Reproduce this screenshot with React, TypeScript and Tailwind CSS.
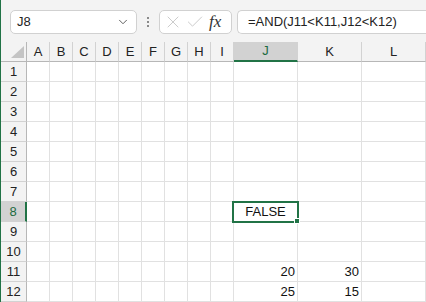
import { Check, ChevronDown, X } from "lucide-react";

const cols = ["A", "B", "C", "D", "E", "F", "G", "H", "I", "J", "K", "L"];
const widths: Record<string, string> = { J: "w-[64px]", K: "w-[64px]", L: "w-[64px]" };
const values: Record<string, string> = { J11: "20", K11: "30", J12: "25", K12: "15" };

function Toolbar() {
  return (
    <div className="flex h-[42px] items-start pt-[10px] pl-[9px]">
      <div className="flex h-[24px] w-[127px] items-center justify-between rounded-[5px] border border-[#d1d1d1] bg-white pl-[6px] pr-[6px] text-[13px] text-[#222]">
        <span>J8</span>
        <ChevronDown size={14} strokeWidth={1.6} className="text-[#555]" />
      </div>
      <div className="flex h-[24px] w-[22px] flex-col items-center justify-center gap-[2px]">
        <span className="h-[2px] w-[2px] bg-[#8a8a8a]" />
        <span className="h-[2px] w-[2px] bg-[#8a8a8a]" />
        <span className="h-[2px] w-[2px] bg-[#8a8a8a]" />
      </div>
      <div className="flex h-[24px] w-[73px] items-center rounded-[5px] border border-[#d1d1d1] bg-white pl-[3px]">
        <X size={20} strokeWidth={1} className="text-[#c2c2c2]" />
        <Check size={20} strokeWidth={1} className="ml-[2px] text-[#c2c2c2]" />
        <span className="ml-[4px] font-['Liberation_Serif',serif] text-[17px] italic text-[#333]">fx</span>
      </div>
      <div className="ml-[5px] flex h-[24px] flex-1 items-center rounded-l-[5px] border border-r-0 border-[#d1d1d1] bg-white pl-[10px] text-[13px] text-[#222]">
        =AND(J11&lt;K11,J12&lt;K12)
      </div>
    </div>
  );
}

function HeaderRow() {
  return (
    <div className="flex h-[20px]">
      <div className="flex h-[20px] w-[26px] shrink-0 items-end justify-end border-r border-b border-[#b7b7b7] pr-[2px] pb-[3px]">
        <svg width="13" height="12" viewBox="0 0 13 12">
          <polygon points="13,0 13,12 0,12" fill="#c4c4c4" />
        </svg>
      </div>
      {cols.map((c) => (
        <div
          key={c}
          className={`flex h-[20px] shrink-0 items-center justify-center border-r border-[#d2d2d2] ${widths[c] ?? "w-[23px]"} ${
            c === "J" ? "border-b-2 border-b-[#217346] bg-[#d2d2d2] text-[#1d6b40]" : "border-b border-b-[#b7b7b7] text-[#222]"
          }`}
        >
          {c}
        </div>
      ))}
    </div>
  );
}

function Row({ n }: { n: number }) {
  const selected = n === 8;
  return (
    <div className="flex h-[20px]">
      <div
        className={`flex h-[20px] w-[26px] shrink-0 items-center justify-center border-b border-b-[#d2d2d2] ${
          selected ? "border-r-2 border-r-[#217346] bg-[#d2d2d2] text-[#1d6b40]" : "border-r border-r-[#b7b7b7] bg-[#f3f3f3] text-[#222]"
        }`}
      >
        {n}
      </div>
      {cols.map((c) => (
        <div
          key={c}
          className={`relative flex h-[20px] shrink-0 items-center justify-end border-r border-b border-[#e1e1e1] bg-white pr-[2px] text-[#111] ${widths[c] ?? "w-[23px]"}`}
        >
          {values[`${c}${n}`]}
          {selected && c === "J" && (
            <>
              <div className="absolute -top-[1px] -left-[2px] z-10 flex h-[22px] w-[67px] items-center justify-center border-2 border-[#217346] text-[#111]">
                FALSE
              </div>
              <div className="absolute -right-[3px] -bottom-[3px] z-20 h-[6px] w-[6px] border border-white bg-[#217346]" />
            </>
          )}
        </div>
      ))}
    </div>
  );
}

export default function App() {
  return (
    <div className="h-[302px] w-[426px] overflow-hidden border-l border-[#217346] bg-[#f3f3f3] font-['Liberation_Sans',Arial,sans-serif] text-[13px]">
      <Toolbar />
      <HeaderRow />
      {Array.from({ length: 12 }, (_, i) => (
        <Row key={i} n={i + 1} />
      ))}
    </div>
  );
}
